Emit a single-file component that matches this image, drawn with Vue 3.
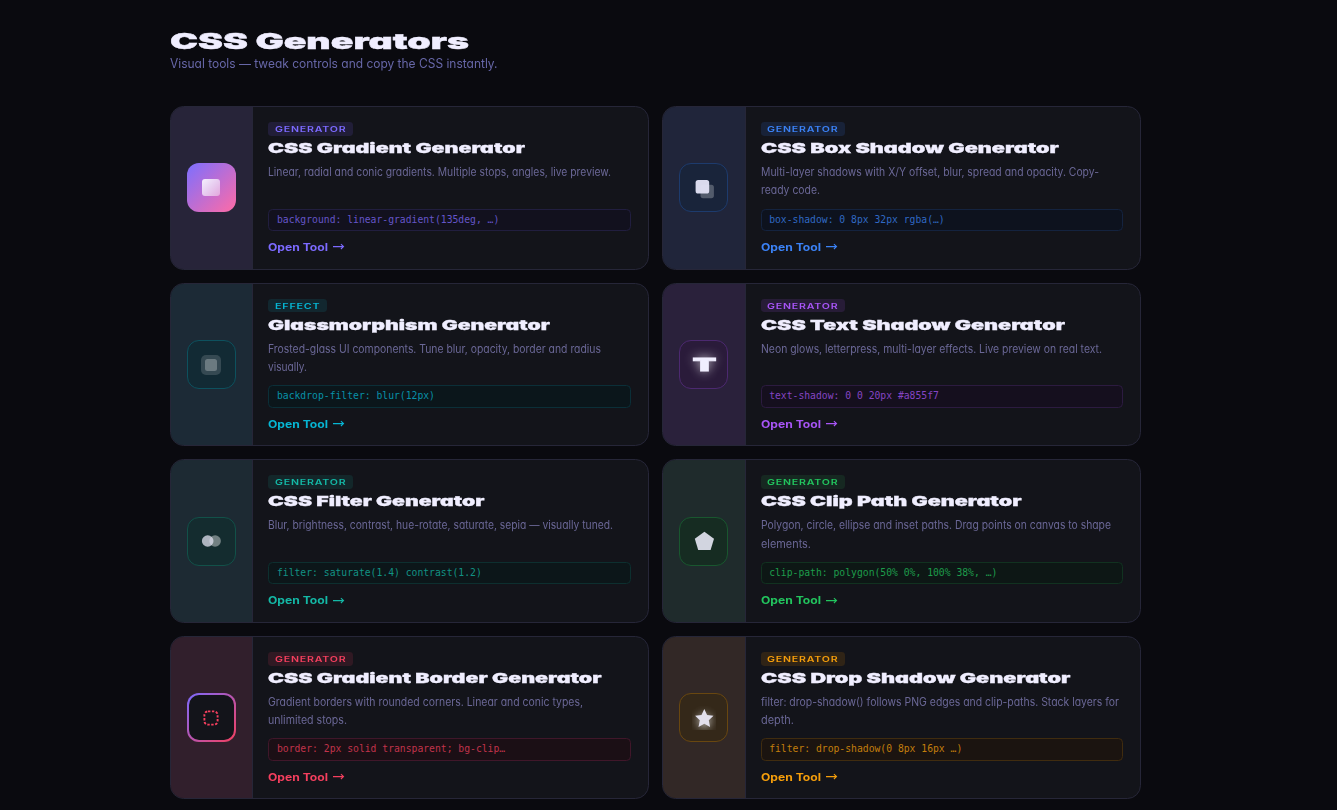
<template>
  <div class="page">
    <header class="page-header">
      <h1 class="page-title"><span v-fit="299" class="fit">CSS Generators</span></h1>
      <p class="page-sub"><span v-fit="327.5" class="fit">Visual tools — tweak controls and copy the CSS instantly.</span></p>
    </header>

    <div class="grid">
      <a v-for="tool in tools" :key="tool.title" class="card" :class="tool.theme">
        <!-- icon column -->
        <div class="preview">
          <div class="icon" :class="'icon-' + tool.icon">
            <div v-if="tool.icon === 'gradient'" class="swatch"></div>
            <svg v-else-if="tool.icon === 'shadow'" width="24" height="24" viewBox="0 0 24 24">
              <rect x="8.5" y="8.8" width="13.4" height="13.4" rx="2.6" fill="#fff" fill-opacity=".25" />
              <rect x="3.6" y="4" width="13.6" height="13.6" rx="2.6" fill="#e2e2f5" fill-opacity=".96" />
            </svg>
            <div v-else-if="tool.icon === 'glass'" class="glass"><div class="glass-core"></div></div>
            <span v-else-if="tool.icon === 'text'" v-fit="23" class="fit letter">T</span>
            <svg v-else-if="tool.icon === 'filter'" width="24" height="24" viewBox="0 0 24 24">
              <circle cx="15.1" cy="12" r="5.8" fill="#fff" fill-opacity=".4" />
              <circle cx="7.7" cy="12" r="5.8" fill="#e2e2f0" fill-opacity=".75" />
            </svg>
            <svg v-else-if="tool.icon === 'clip'" width="24" height="24" viewBox="0 0 24 24">
              <path d="M12.4 2.8 22 9.8 18.6 20.9H6.2L2.8 9.8Z" fill="#d2d5e0" />
            </svg>
            <svg v-else-if="tool.icon === 'border'" class="dashed" width="16" height="16" viewBox="0 0 16 16">
              <rect x="1.4" y="1.4" width="13.2" height="13.2" rx="3.6" fill="none" stroke="#f43f5e" stroke-width="1.9" stroke-dasharray="2.4 1.5" />
            </svg>
            <div v-else class="star-box">
              <svg class="star" width="24" height="24" viewBox="0 0 24 24">
                <path d="M12.3 3 15.1 9 21.5 9.8 16.8 14.3 18.1 20.9 12.3 17.7 6.5 20.9 7.8 14.3 3.1 9.8 9.5 9Z" fill="#e2dfec" />
              </svg>
            </div>
          </div>
        </div>

        <div class="body">
          <div class="badge"><span v-fit="tool.badge === 'EFFECT' ? 45.5 : 71.5" class="fit">{{ tool.badge }}</span></div>
          <h2 class="title"><span v-fit="tool.width" class="fit">{{ tool.title }}</span></h2>
          <p class="desc">
            <span v-for="line in tool.desc" :key="line[0]" class="line"><span v-fit="line[1]" class="fit">{{ line[0] }}</span></span>
          </p>
          <code class="code">{{ tool.code }}</code>
          <div class="open">
            <span class="open-label"><span v-fit="60" class="fit">Open Tool</span></span>
            <svg width="12" height="8" viewBox="0 0 12 8" fill="none" stroke="currentColor" stroke-width="1.1">
              <path d="M0 3.6H10.4M7.9 1.2 10.5 3.6 7.9 6" />
            </svg>
          </div>
        </div>
      </a>
    </div>
  </div>
</template>

<script setup>
// stretches a label horizontally to the given width
const vFit = {
  mounted(el, { value }) {
    el.style.transform = `scaleX(${value / el.getBoundingClientRect().width})`
  }
}

const tools = [
  {
    theme: 'purple', icon: 'gradient', badge: 'GENERATOR', title: 'CSS Gradient Generator', width: 257,
    desc: [['Linear, radial and conic gradients. Multiple stops, angles, live preview.', 343]],
    code: 'background: linear-gradient(135deg, …)'
  },
  {
    theme: 'blue', icon: 'shadow', badge: 'GENERATOR', title: 'CSS Box Shadow Generator', width: 298,
    desc: [['Multi-layer shadows with X/Y offset, blur, spread and opacity. Copy-', 338], ['ready code.', 59]],
    code: 'box-shadow: 0 8px 32px rgba(…)'
  },
  {
    theme: 'cyan', icon: 'glass', badge: 'EFFECT', title: 'Glassmorphism Generator', width: 282,
    desc: [['Frosted-glass UI components. Tune blur, opacity, border and radius', 333], ['visually.', 39]],
    code: 'backdrop-filter: blur(12px)'
  },
  {
    theme: 'violet', icon: 'text', badge: 'GENERATOR', title: 'CSS Text Shadow Generator', width: 304,
    desc: [['Neon glows, letterpress, multi-layer effects. Live preview on real text.', 341]],
    code: 'text-shadow: 0 0 20px #a855f7'
  },
  {
    theme: 'teal', icon: 'filter', badge: 'GENERATOR', title: 'CSS Filter Generator', width: 216.5,
    desc: [['Blur, brightness, contrast, hue-rotate, saturate, sepia — visually tuned.', 345]],
    code: 'filter: saturate(1.4) contrast(1.2)'
  },
  {
    theme: 'green', icon: 'clip', badge: 'GENERATOR', title: 'CSS Clip Path Generator', width: 260.5,
    desc: [['Polygon, circle, ellipse and inset paths. Drag points on canvas to shape', 350], ['elements.', 50]],
    code: 'clip-path: polygon(50% 0%, 100% 38%, …)'
  },
  {
    theme: 'red', icon: 'border', badge: 'GENERATOR', title: 'CSS Gradient Border Generator', width: 333.5,
    desc: [['Gradient borders with rounded corners. Linear and conic types,', 315], ['unlimited stops.', 79]],
    code: 'border: 2px solid transparent; bg-clip…'
  },
  {
    theme: 'orange', icon: 'star', badge: 'GENERATOR', title: 'CSS Drop Shadow Generator', width: 309.5,
    desc: [['filter: drop-shadow() follows PNG edges and clip-paths. Stack layers for', 358], ['depth.', 33]],
    code: 'filter: drop-shadow(0 8px 16px …)'
  }
]
</script>

<style>
body {
  margin: 0;
  background: #0a0a0f;
}
</style>

<style scoped>
.page {
  box-sizing: border-box;
  height: 810px;
  overflow: hidden;
  padding: 28.2px 0 0 170.1px;
  background: #0a0a0f;
  font-family: Inter, "Liberation Sans", sans-serif;
  font-feature-settings: "cv11";
}
.fit {
  display: inline-block;
  transform-origin: left center;
  white-space: nowrap;
}

.page-header { height: 78.1px; }
.page-title {
  margin: 0;
  height: 26px;
  line-height: 27px;
  font-size: 22px;
  font-weight: 900;
  -webkit-text-stroke: .4px #f0eeff;
  color: #f0eeff;
}
.page-sub {
  margin: 0;
  line-height: 19px;
  font-size: 12.8px;
  color: #6767a8;
}

.grid {
  display: grid;
  grid-template-columns: 478.7px 478.7px;
  grid-auto-rows: 163.4px;
  gap: 13.2px 13.5px;
}

/* ===== card ===== */
.card {
  box-sizing: border-box;
  display: flex;
  overflow: hidden;
  background: #13141a;
  border: 1px solid #262638;
  border-radius: 13.6px;
}
.preview {
  box-sizing: border-box;
  flex: none;
  width: 82.4px;
  display: flex;
  align-items: center;
  justify-content: center;
  background: var(--panel);
  border-right: 1px solid #262638;
}
.body {
  flex: 1;
  min-width: 0;
  display: flex;
  flex-direction: column;
  align-items: flex-start;
  padding: 15px 17px 13.7px 14.9px;
}
.badge {
  box-sizing: border-box;
  height: 13.6px;
  padding: 0 6.6px;
  min-width: 84.6px;
  border-radius: 3.4px;
  background: var(--tint);
  color: var(--accent);
  font-size: 7.8px;
  font-weight: 600;
  letter-spacing: .6px;
  line-height: 14px;
}
.cyan .badge { min-width: 0; width: 58.7px; }
.title {
  margin: 3.4px 0 0;
  height: 19px;
  line-height: 19px;
  font-size: 13.2px;
  font-weight: 900;
  -webkit-text-stroke: .3px #f0eeff;
  color: #f0eeff;
}
.desc {
  margin: 4.8px 0 0;
  font-size: 11.1px;
  line-height: 18.4px;
  color: #6a6796;
}
.line { display: block; height: 18.4px; }
.code {
  box-sizing: border-box;
  width: 100%;
  height: 22.4px;
  margin-top: auto;
  padding: 0 7.6px;
  border: 1px solid var(--line);
  border-radius: 4.5px;
  background: var(--code-bg);
  color: var(--code);
  font-family: "DejaVu Sans Mono", "Liberation Mono", monospace;
  font-size: 9.72px;
  line-height: 20.6px;
  white-space: nowrap;
}
.open {
  display: flex;
  align-items: center;
  height: 15px;
  margin-top: 9px;
  color: var(--accent);
  font-size: 10.5px;
  font-weight: 650;
  line-height: 15px;
}
.open-label { width: 65px; }

/* ===== icons ===== */
.icon {
  box-sizing: border-box;
  width: 49px;
  height: 49px;
  display: flex;
  align-items: center;
  justify-content: center;
  border: 1px solid var(--icon-line);
  border-radius: 12px;
  background: var(--icon-bg);
}
.icon svg { display: block; }
.icon-gradient {
  border: none;
  background: linear-gradient(135deg, #7c6fff, #ff6ba6);
}
.swatch {
  width: 17.6px;
  height: 17.6px;
  margin: 0 1px 1px 0;
  border-radius: 3px;
  background: linear-gradient(135deg, rgba(255, 255, 255, .9), rgba(255, 255, 255, .4));
}
.glass {
  width: 20px;
  height: 20px;
  margin-right: 1px;
  display: flex;
  align-items: center;
  justify-content: center;
  border-radius: 5px;
  background: rgba(255, 255, 255, .15);
}
.glass-core {
  width: 12px;
  height: 12px;
  border-radius: 2.5px;
  background: rgba(255, 255, 255, .27);
}
.icon-text { justify-content: flex-start; padding-left: 12.5px; }
.letter {
  font-size: 17.5px;
  font-weight: 900;
  line-height: 24px;
  color: #f0eeff;
  -webkit-text-stroke: 1.1px #f0eeff;
  text-shadow: 0 0 8px rgba(255, 255, 255, .9);
}
.icon-border {
  border: 2px solid transparent;
  background: linear-gradient(#13141a, #13141a) padding-box, linear-gradient(135deg, #7c6aff, #f43f5e) border-box;
}
.icon .dashed { margin-right: 1px; }
.star-box { width: 24px; height: 24px; overflow: hidden; }
.star { filter: drop-shadow(0 2px 4px rgba(255, 255, 255, .7)); }

/* ===== themes ===== */
.purple { --accent: #7c6aff; --panel: #272439; --tint: #211e38; --code: #6555c9; --code-bg: #12111e; --line: #211e3f; }
.blue { --accent: #3b82f6; --panel: #20253a; --tint: #182238; --code: #3069c4; --code-bg: #0d121e; --line: #14233f; --icon-bg: #19243a; --icon-line: #1d3b6d; }
.cyan { --accent: #06b6d4; --panel: #1c2a36; --tint: #12272f; --code: #0891a8; --code-bg: #0b161b; --line: #0b2f38; --icon-bg: #122a34; --icon-line: #0d515e; }
.violet { --accent: #a855f7; --panel: #2a213b; --tint: #271c37; --code: #8545c3; --code-bg: #150f1e; --line: #2c1b40; --icon-bg: #2a1b3a; --icon-line: #4c2970; }
.teal { --accent: #14b8a6; --panel: #1d2a33; --tint: #13272a; --code: #129284; --code-bg: #0c1619; --line: #0d2f2f; --icon-bg: #142c2f; --icon-line: #125149; }
.green { --accent: #22c55e; --panel: #1f2b2c; --tint: #162821; --code: #1d9c4b; --code-bg: #0d1715; --line: #113220; --icon-bg: #162c22; --icon-line: #19572f; }
.red { --accent: #f43f5e; --panel: #311f2c; --tint: #301923; --code: #c1334b; --code-bg: #1b0f15; --line: #40172a; }
.orange { --accent: #f59e0b; --panel: #322826; --tint: #302416; --code: #c27e0c; --code-bg: #1b1410; --line: #402c0f; --icon-bg: #342819; --icon-line: #694710; }
</style>
